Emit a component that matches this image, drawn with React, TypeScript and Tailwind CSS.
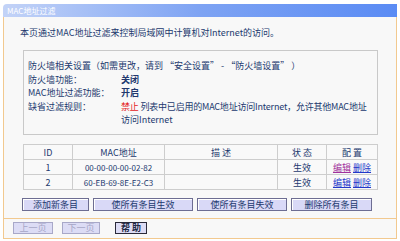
import React from 'react';

const font = { fontFamily: '"Noto Sans CJK SC", "Liberation Sans", sans-serif' };

type Entry = { id: number; mac: string; desc: string; status: string; visited: boolean };

const entries: Entry[] = [
  { id: 1, mac: '00-00-00-00-02-82', desc: '', status: '生效', visited: true },
  { id: 2, mac: '60-EB-69-8E-E2-C3', desc: '', status: '生效', visited: false },
];

function Btn({ label, w }: { label: string; w: string }) {
  return (
    <button
      className={`${w} h-[13px] bg-[#d9d9f7] border border-[#6d6d92] shadow-[inset_1px_1px_0_#ffffff] text-[9px] leading-[11px] text-[#22386e] flex items-center justify-center`}
    >
      {label}
    </button>
  );
}

export default function App() {
  return (
    <div className="w-[400px] h-[241px] bg-white pt-[4px] px-[3px] text-[#22386e]" style={font}>
      <div className="h-[235px] flex flex-col rounded-tl-[4px] overflow-hidden">
        {/* title bar */}
        <div className="h-[13px] bg-gradient-to-r from-[#c3d3f7] via-[#7ea3f3] to-[#5a8bf4] flex items-center pl-[4px]">
          <span className="text-white text-[8px] leading-[10px]">MAC地址过滤</span>
        </div>

        <div className="flex-1 flex flex-col bg-[#f8f8f8] border-x border-b border-[#f2c98f]">
          <div className="flex-1 flex flex-col">
            <p className="mt-[10px] pl-[16px] text-[9px] leading-[12px]">
              本页通过MAC地址过滤来控制局域网中计算机对Internet的访问。
            </p>

            <div className="ml-[19px] mt-[11px] w-[355px] h-[85px] border border-[#c9c9c9] pt-[8px] pl-[4px] text-[9px] leading-[13.5px]">
              <div>防火墙相关设置（如需更改，请到 “安全设置” - “防火墙设置” ）</div>
              <div className="flex">
                <span className="w-[93px]">防火墙功能：</span>
                <span className="font-bold">关闭</span>
              </div>
              <div className="flex">
                <span className="w-[93px]">MAC地址过滤功能：</span>
                <span className="font-bold">开启</span>
              </div>
              <div className="flex">
                <span className="w-[93px] shrink-0">缺省过滤规则：</span>
                <div className="flex flex-col">
                  <span className="whitespace-nowrap tracking-[-0.2px]">
                    <span className="text-[#e5231b]">禁止</span> 列表中已启用的MAC地址访问Internet，允许其他MAC地址
                  </span>
                  <span>访问Internet</span>
                </div>
              </div>
            </div>

            <table className="ml-[19px] mt-[9px] w-[355px] border-collapse text-[9px] leading-[11px] text-center bg-[#f9f9f9]">
              <thead>
                <tr className="h-[15px]">
                  <th className="w-[49px] border border-[#cdcdcd] font-normal">ID</th>
                  <th className="w-[92px] border border-[#cdcdcd] font-normal">MAC地址</th>
                  <th className="w-[113px] border border-[#cdcdcd] font-normal">描 述</th>
                  <th className="w-[49px] border border-[#cdcdcd] font-normal">状 态</th>
                  <th className="border border-[#cdcdcd] font-normal">配 置</th>
                </tr>
              </thead>
              <tbody>
                {entries.map((e) => (
                  <tr key={e.id} className="h-[15px]">
                    <td className="border border-[#cdcdcd]">{e.id}</td>
                    <td className="border border-[#cdcdcd] text-[8px]">{e.mac}</td>
                    <td className="border border-[#cdcdcd]">{e.desc}</td>
                    <td className="border border-[#cdcdcd]">{e.status}</td>
                    <td className="border border-[#cdcdcd]">
                      <span className={`underline ${e.visited ? 'text-[#a0329c]' : 'text-[#2237c9]'}`}>编辑</span>{' '}
                      <span className="underline text-[#2237c9]">删除</span>
                    </td>
                  </tr>
                ))}
              </tbody>
            </table>

            <div className="mt-[8px] pl-[18px] flex">
              <Btn label="添加新条目" w="w-[67px]" />
              <div className="w-[4px]" />
              <Btn label="使所有条目生效" w="w-[100px]" />
              <div className="w-[4px]" />
              <Btn label="使所有条目失效" w="w-[90px]" />
              <div className="w-[4px]" />
              <Btn label="删除所有条目" w="w-[81px]" />
            </div>
          </div>

          <div className="h-[20px] border-t border-[#f2c98f] flex items-start pt-[3px] pl-[9px]">
            <button className="w-[40px] h-[12px] bg-[#dcdcf5] border border-[#a8a8c8] text-[9px] leading-[10px] text-[#a6a6c6]">上一页</button>
            <button className="ml-[9px] w-[38px] h-[12px] bg-[#dcdcf5] border border-[#a8a8c8] text-[9px] leading-[10px] text-[#a6a6c6]">下一页</button>
            <button className="ml-[15px] w-[32px] h-[12px] bg-[#dcdcf5] border-[1.5px] border-[#2a2a3a] text-[9px] leading-[10px] font-bold text-[#1f2a44]">帮 助</button>
          </div>
        </div>
      </div>
    </div>
  );
}
